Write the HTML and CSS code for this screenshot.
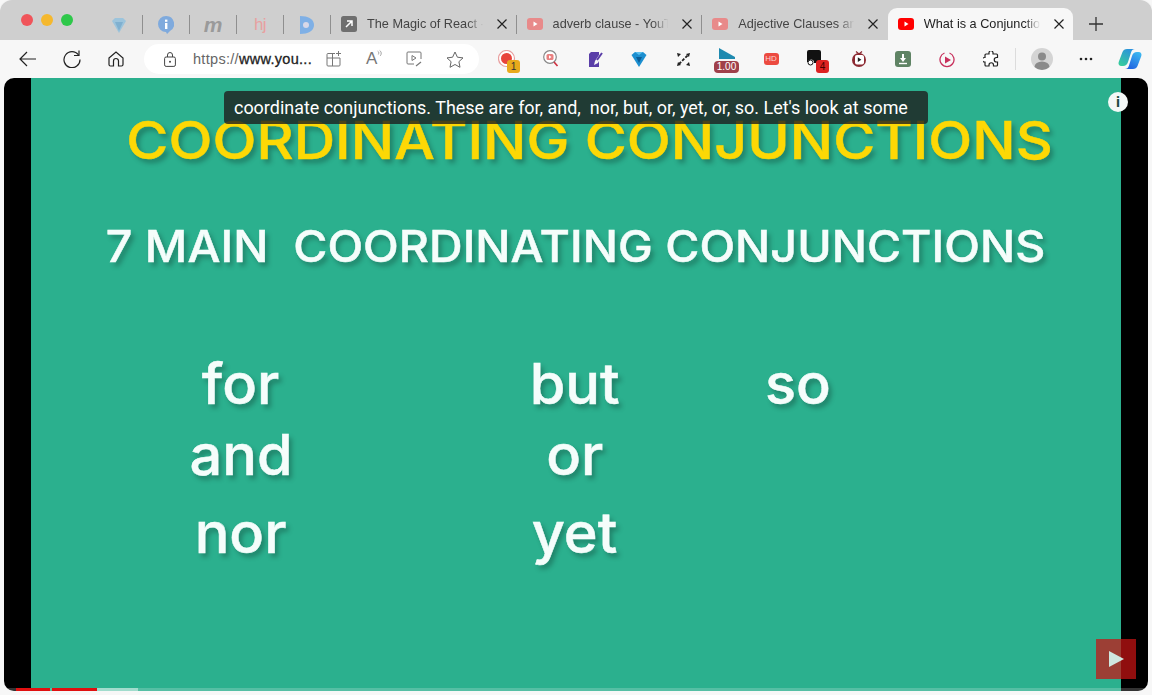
FILE: index.html
```html
<!DOCTYPE html>
<html lang="en">
<head>
  <meta charset="UTF-8">
  <title>What is a Conjunction</title>
  <link rel="stylesheet" href="styles.css">
</head>
<body>

<div class="window">

  <!-- tabs -->
  <div class="tabbar">
    <div class="traffic">
      <span class="dot red"></span>
      <span class="dot yellow"></span>
      <span class="dot green"></span>
    </div>

    <div class="pinned">
      <svg width="16" height="18" viewBox="0 0 16 18"><path d="M1 5l3-3h8l3 3-7 12z" fill="#9cc4dc"/><path d="M4 6h8l-4 9z" fill="#7fb0d0"/></svg>
    </div>
    <div class="pinned">
      <svg width="16" height="18" viewBox="0 0 16 18"><path d="M8 0a8 8 0 0 1 4 15l-3 3-1-2A8 8 0 0 1 8 0z" fill="#7faadd"/><rect x="7" y="7" width="2.4" height="6" fill="#fff"/><rect x="7" y="3.6" width="2.4" height="2.2" fill="#fff"/></svg>
    </div>
    <div class="pinned"><span class="fav-m">m</span></div>
    <div class="pinned"><span class="fav-hj">hj</span></div>
    <div class="pinned">
      <svg width="16" height="18" viewBox="0 0 16 18"><path d="M1 0c8 0 14 3 14 9s-6 9-14 9z" fill="#7fb0e6"/><circle cx="7" cy="9" r="3" fill="#d8d8e8"/></svg>
    </div>

    <div class="tab">
      <svg class="fav" width="16" height="16" viewBox="0 0 16 16"><rect width="16" height="16" rx="2.5" fill="#6f6f6f"/><path d="M5 11l5.500-5.500M6 5h5v5" stroke="#fff" stroke-width="1.500" fill="none"/></svg>
      <span class="tab-title">The Magic of React -</span>
      <svg class="tab-close" width="10" height="10" viewBox="0 0 10 10"><path d="M0.500 0.500l9 9M9.500 0.500l-9 9" stroke="#222" stroke-width="1.200"/></svg>
    </div>
    <div class="tab">
      <svg class="fav" width="16" height="12" viewBox="0 0 16 12"><rect width="16" height="12" rx="3" fill="#e88a8a"/><path d="M6.500 3.500l4 2.500-4 2.500z" fill="#fff"/></svg>
      <span class="tab-title">adverb clause - YouT</span>
      <svg class="tab-close" width="10" height="10" viewBox="0 0 10 10"><path d="M0.500 0.500l9 9M9.500 0.500l-9 9" stroke="#222" stroke-width="1.200"/></svg>
    </div>
    <div class="tab">
      <svg class="fav" width="16" height="12" viewBox="0 0 16 12"><rect width="16" height="12" rx="3" fill="#e88a8a"/><path d="M6.500 3.500l4 2.500-4 2.500z" fill="#fff"/></svg>
      <span class="tab-title">Adjective Clauses an</span>
      <svg class="tab-close" width="10" height="10" viewBox="0 0 10 10"><path d="M0.500 0.500l9 9M9.500 0.500l-9 9" stroke="#222" stroke-width="1.200"/></svg>
    </div>
    <div class="tab active">
      <svg class="fav" width="16" height="12" viewBox="0 0 16 12"><rect width="16" height="12" rx="3" fill="#f00"/><path d="M6.500 3.500l4 2.500-4 2.500z" fill="#fff"/></svg>
      <span class="tab-title">What is a Conjunctior</span>
      <svg class="tab-close" width="10" height="10" viewBox="0 0 10 10"><path d="M0.500 0.500l9 9M9.500 0.500l-9 9" stroke="#222" stroke-width="1.200"/></svg>
    </div>
    <div class="newtab">
      <svg width="14" height="14" viewBox="0 0 14 14"><path d="M7 0v14M0 7h14" stroke="#333" stroke-width="1.300"/></svg>
    </div>
  </div>

  <!-- address bar and extensions -->
  <div class="toolbar">
    <div class="tool">
      <svg width="18" height="16" viewBox="0 0 18 16"><path d="M17 8H1.500M8 1L1 8l7 7" stroke="#222" stroke-width="1.200" fill="none"/></svg>
    </div>
    <div class="tool">
      <svg width="18" height="18" viewBox="0 0 18 18"><path d="M15.500 5A8 8 0 1 0 17 9.500" stroke="#222" stroke-width="1.200" fill="none"/><path d="M16 0.500V5.500H11" stroke="#222" stroke-width="1.200" fill="none"/></svg>
    </div>
    <div class="tool">
      <svg width="16" height="16" viewBox="0 0 16 16"><path d="M1 7l7-6 7 6v6.500a1.500 1.500 0 0 1-1.500 1.500H10.500V10a2.500 2.500 0 0 0-5 0v5H2.500A1.500 1.500 0 0 1 1 13.500z" stroke="#222" stroke-width="1.200" fill="none"/></svg>
    </div>

    <div class="addressbar">
      <svg class="lock" width="12" height="15" viewBox="0 0 12 15"><rect x="0.600" y="5" width="10.800" height="9.400" rx="1.500" stroke="#444" stroke-width="1" fill="none"/><path d="M3.500 5V3a2.500 2.500 0 0 1 5 0v2" stroke="#444" fill="none"/><circle cx="6" cy="9.700" r="1" fill="#444"/></svg>
      <span class="url">https://<b>www.you...</b></span>
      <div class="addr-icons">
        <svg width="16" height="16" viewBox="0 0 16 16"><path d="M9 2.500H2a1 1 0 0 0-1 1V14a1 1 0 0 0 1 1h11a1 1 0 0 0 1-1V7H1M6.500 3v12" stroke="#777" fill="none"/><path d="M12.500 0v5M10 2.500h5" stroke="#777" fill="none"/></svg>
        <span class="read-aloud">A<svg width="7" height="9" viewBox="0 0 7 9"><path d="M1 1c2 1 2 3 1 5M4 0c3 2 3 5 1 8" stroke="#777" fill="none"/></svg></span>
        <svg width="16" height="16" viewBox="0 0 16 16"><path d="M8 13H2a1 1 0 0 1-1-1V2a1 1 0 0 1 1-1h12a1 1 0 0 1 1 1v6" stroke="#777" fill="none"/><path d="M6 4.500l4 2.500-4 2.500z" stroke="#777" fill="none"/><path d="M10 15l5-4" stroke="#777" stroke-width="1.300"/></svg>
        <svg width="18" height="17" viewBox="0 0 18 17"><path d="M9 1l2.400 5.200 5.600.7-4.100 3.800 1.100 5.600L9 13.500l-5 2.800 1.100-5.600L1 6.900l5.600-.7z" stroke="#666" fill="none"/></svg>
      </div>
    </div>

    <div class="tool">
      <svg width="18" height="18" viewBox="0 0 18 18"><circle cx="8.500" cy="8.500" r="8" stroke="#e8a0a0" stroke-width="1.200" fill="#fff"/><circle cx="8.500" cy="8.500" r="5.500" fill="#e8443c"/></svg>
      <span class="badge badge-yellow">1</span>
    </div>
    <div class="tool">
      <svg width="16" height="18" viewBox="0 0 16 18"><circle cx="7" cy="7" r="6.300" stroke="#888" stroke-width="1.200" fill="#fff"/><rect x="3.500" y="4" width="7" height="6" rx="1.500" fill="#e98080"/><path d="M6 5.300l2.500 1.700L6 8.700z" fill="#fff"/><path d="M11 12l3.500 4" stroke="#d03040" stroke-width="1.600"/></svg>
    </div>
    <div class="tool">
      <svg width="15" height="17" viewBox="0 0 15 17"><path d="M3 1h8v3L7 10l-1 4 4-2 1-2v6H1V3z" fill="#5a3ea8"/><path d="M14 2L9 9" stroke="#5a3ea8" stroke-width="2"/></svg>
    </div>
    <div class="tool">
      <svg width="16" height="17" viewBox="0 0 16 17"><path d="M0.500 4L4 1h8l3.500 3L8 16z" fill="#1c8fd0"/><path d="M5 6h6L8 12z" fill="#0c5d96"/><path d="M4 1h8L8 4z" fill="#5cc0ee"/></svg>
    </div>
    <div class="tool">
      <svg width="15" height="15" viewBox="0 0 15 15"><path d="M3 12L12 3" stroke="#222" stroke-width="1.800" stroke-dasharray="3 1.500"/><path d="M1 1l4 1-3 3zM14 1l-1 4-3-3zM1 14l1-4 3 3zM14 14l-4-1 3-3z" fill="#222"/></svg>
    </div>
    <div class="tool">
      <svg class="speed-tri" width="18" height="11" viewBox="0 0 18 11"><path d="M1 0l16 9v2H1z" fill="#1f8ab0"/></svg>
      <span class="speed">1.00</span>
    </div>
    <div class="tool">
      <span class="hd">HD</span>
    </div>
    <div class="tool">
      <svg class="ext-black" width="16" height="16" viewBox="0 0 16 16"><path d="M3 0h10a2 2 0 0 1 2 2v11H8a3 3 0 0 0-6-1H1V2a2 2 0 0 1 2-2z" fill="#111"/><circle cx="4.500" cy="12.500" r="2.500" fill="#fff" stroke="#111"/></svg>
      <span class="badge badge-red">4</span>
    </div>
    <div class="tool">
      <svg width="16" height="17" viewBox="0 0 16 17"><circle cx="8" cy="9" r="7" fill="#8c2a32"/><path d="M5 0.500l3 2.500 3-2.500" stroke="#8c2a32" stroke-width="1.200" fill="none"/><rect x="4" y="4" width="9" height="9.500" rx="2" fill="#fff"/><path d="M6.800 6.300l3.600 2.400-3.600 2.400z" fill="#222"/></svg>
    </div>
    <div class="tool">
      <svg width="16" height="16" viewBox="0 0 16 16"><rect width="16" height="16" rx="3" fill="#5f8364"/><path d="M8 3v5" stroke="#fff" stroke-width="2"/><path d="M5 7h6l-3 4z" fill="#fff"/><path d="M4 12.500h8" stroke="#fff" stroke-width="1.400"/></svg>
    </div>
    <div class="tool">
      <svg width="16" height="17" viewBox="0 0 16 17"><path d="M10.500 2a7 7 0 1 1-5 0" stroke="#c8305c" stroke-width="1.300" fill="none"/><path d="M6 5.500l6 3.500-6 3.500z" fill="#c8305c"/></svg>
    </div>
    <div class="tool">
      <svg width="16" height="17" viewBox="0 0 16 17"><path d="M6 1.500a2 2 0 0 1 4 .5v1h3.500a1 1 0 0 1 1 1v2.500h-1a2 2 0 0 0 0 4.500h1V14a1 1 0 0 1-1 1H10.500v-1a2.200 2.200 0 0 0-4.500 0v1H3a1 1 0 0 1-1-1v-3H1.500a2.200 2.200 0 0 1 0-4.500H2V4a1 1 0 0 1 1-1h3z" stroke="#222" stroke-width="1.200" fill="#fff"/></svg>
    </div>
    <div class="tool-sep"></div>
    <div class="tool">
      <svg width="22" height="22" viewBox="0 0 22 22"><circle cx="11" cy="11" r="11" fill="#d4d4d4"/><circle cx="11" cy="8.500" r="4" fill="#8a8a8a"/><path d="M3.500 19a7.500 5.500 0 0 1 15 0 11 11 0 0 1-15 0z" fill="#8a8a8a"/></svg>
    </div>
    <div class="tool">
      <svg width="14" height="4" viewBox="0 0 14 4"><circle cx="2" cy="2" r="1.300" fill="#222"/><circle cx="7" cy="2" r="1.300" fill="#222"/><circle cx="12" cy="2" r="1.300" fill="#222"/></svg>
    </div>
    <div class="tool">
      <svg width="24" height="22" viewBox="0 0 24 22">
        <defs>
          <linearGradient id="copL" x1="0.800" y1="0" x2="0.200" y2="1"><stop offset="0" stop-color="#2a8fe0"/><stop offset="1" stop-color="#36cc9c"/></linearGradient>
          <linearGradient id="copR" x1="0.800" y1="0" x2="0.200" y2="1"><stop offset="0" stop-color="#1f5fe0"/><stop offset="1" stop-color="#3cb8f0"/></linearGradient>
        </defs>
        <path d="M9 1h8c-2 0-3.200 1-3.800 3L10 14c-.8 2.500-2.500 4-5 4H3.500C1 18 0 16 .7 14L4.500 4C5.300 2 6.800 1 9 1z" fill="url(#copL)"/>
        <path d="M9 1h8c-2 0-3.200 1-3.800 3L10 14c-.8 2.500-2.500 4-5 4H3.500C1 18 0 16 .7 14L4.500 4C5.300 2 6.800 1 9 1z" fill="url(#copR)" transform="rotate(180 12 11)"/>
      </svg>
    </div>
  </div>

  <!-- video -->
  <div class="player">
    <div class="stage">
      <h1 class="title">COORDINATING CONJUNCTIONS</h1>
      <h2 class="subtitle">7 MAIN&nbsp; COORDINATING CONJUNCTIONS</h2>
      <div class="words">
        <div class="word-col">
          <span>for</span>
          <span>and</span>
          <span>nor</span>
        </div>
        <div class="word-col">
          <span>but</span>
          <span>or</span>
          <span>yet</span>
        </div>
        <div class="word-col">
          <span>so</span>
        </div>
      </div>
    </div>

    <div class="caption">coordinate conjunctions. These are for, and,&nbsp; nor, but, or, yet, or, so. Let's look at some</div>
    <div class="info"><span>i</span></div>
    <div class="playbtn">
      <svg width="15" height="16" viewBox="0 0 15 16"><path d="M0 0l15 8-15 8z" fill="#cfe8e0"/></svg>
    </div>
    <div class="progress">
      <div class="seg seg-a"></div>
      <div class="seg seg-b"></div>
      <div class="seg seg-buf"></div>
    </div>
  </div>

</div>

</body>
</html>
```

FILE: styles.css
```css
* {
  box-sizing: border-box;
}
html, body {
  margin: 0;
  height: 100%;
  overflow: hidden;
}
body {
  background-color: #f7f7f7;
  font-family: "Liberation Sans", Arial, sans-serif;
}
.window {
  height: 695px;
  display: flex;
  flex-direction: column;
}

/* tabs */
.tabbar {
  height: 40px;
  flex: none;
  display: flex;
  align-items: stretch;
  background-color: #cfcfcf;
  border-radius: 12px 12px 0 0;
  box-shadow: 0 0 0 1px #f4f4f4;
}
.traffic {
  width: 96px;
  padding: 14px 0 0 21px;
  display: flex;
  gap: 8px;
  align-items: flex-start;
}
.dot {
  width: 12px;
  height: 12px;
  border-radius: 50%;
}
.dot.red { background-color: #f0545a; }
.dot.yellow { background-color: #f5b82e; }
.dot.green { background-color: #2ec84a; }

.pinned {
  width: 47px;
  margin-top: 15px;
  height: 19px;
  display: flex;
  align-items: center;
  justify-content: center;
  border-right: 1px solid #8f8f8f;
}
.fav-m {
  font-style: italic;
  font-weight: bold;
  font-size: 21px;
  color: #9a9a9a;
  line-height: 16px;
}
.fav-hj {
  font-size: 17px;
  color: #e8a0a0;
  letter-spacing: -0.5px;
  line-height: 16px;
}
.tab {
  width: 185.6px;
  margin-top: 8px;
  padding: 0 8px 0 10px;
  display: flex;
  align-items: center;
  position: relative;
  color: #444;
  font-size: 12.7px;
}
.tab::after {
  content: "";
  position: absolute;
  right: 0;
  top: 7px;
  height: 19px;
  border-right: 1px solid #8f8f8f;
}
.tab.active {
  width: 185px;
  background-color: #f7f7f7;
  border-radius: 9px 9px 0 0;
  color: #222;
}
.tab.active::after {
  display: none;
}
.tab:nth-last-child(3)::after {
  display: none;
}
.fav {
  flex: none;
  margin-right: 10px;
}
.tab-title {
  flex: 1;
  white-space: nowrap;
  -webkit-mask-image: linear-gradient(to right, #000 84%, transparent 97%);
  mask-image: linear-gradient(to right, #000 84%, transparent 97%);
}
.tab-close {
  flex: none;
  margin: 0 2px 0 10px;
}
.newtab {
  width: 46px;
  padding-left: 16px;
  padding-top: 17px;
}

/* toolbar */
.toolbar {
  height: 38px;
  flex: none;
  display: flex;
  align-items: center;
  padding-left: 6px;
  background-color: #f7f7f7;
}
.tool {
  width: 44px;
  height: 34px;
  flex: none;
  display: flex;
  align-items: center;
  justify-content: center;
  position: relative;
}
.tool-sep {
  width: 3px;
  height: 22px;
  flex: none;
  margin-right: 4px;
  border-right: 1px solid #dcdcdc;
}
.addressbar {
  width: 335px;
  height: 30px;
  flex: none;
  margin: 0 6px;
  padding-left: 20px;
  display: flex;
  align-items: center;
  background-color: #fff;
  border-radius: 15px;
}
.lock {
  flex: none;
  margin-right: 17px;
}
.url {
  width: 125px;
  flex: none;
  font-size: 14.5px;
  letter-spacing: 0.3px;
  color: #666;
  white-space: nowrap;
}
.url b {
  font-weight: normal;
  color: #222;
  -webkit-text-stroke: 0.3px #222;
}
.addr-icons {
  display: flex;
  align-items: center;
  gap: 24px;
  margin-left: 8px;
}
.read-aloud {
  font-size: 17px;
  color: #777;
  display: flex;
  align-items: flex-start;
  width: 16px;
}
.badge {
  position: absolute;
  right: 9px;
  bottom: 3px;
  width: 13px;
  height: 13px;
  border-radius: 3px;
  font-size: 10px;
  line-height: 13px;
  text-align: center;
}
.badge-yellow {
  background-color: #e8aa1c;
  color: #333;
}
.badge-red {
  right: 8px;
  background-color: #dd2222;
  color: #400;
}
.ext-black {
  margin: -3px 0 0 -2px;
}
.speed-tri {
  position: absolute;
  top: 6px;
  left: 13px;
}
.speed {
  position: absolute;
  left: 9px;
  bottom: 3px;
  width: 25px;
  height: 12px;
  background-color: #a0404a;
  color: #fff;
  border-radius: 4px;
  font-size: 10px;
  line-height: 12px;
  text-align: center;
}
.hd {
  width: 15px;
  height: 12px;
  background-color: #ec4a40;
  color: #fbd5d0;
  border-radius: 3px;
  font-size: 8px;
  line-height: 12px;
  text-align: center;
}

/* video */
.player {
  height: 613px;
  flex: none;
  margin: 0 4px;
  padding: 0 27px;
  background-color: #000;
  border-radius: 10px;
  position: relative;
  overflow: hidden;
}
.stage {
  height: 100%;
  padding-top: 36px;
  display: flex;
  flex-direction: column;
  align-items: center;
  background-color: #2bb08e;
  font-family: Inter, "Liberation Sans", sans-serif;
}
/* Inter runs narrower than the lettering in the video, so it is widened */
.title {
  margin: 0 0 0 28px;
  font-size: 52px;
  line-height: 54px;
  font-weight: 500;
  -webkit-text-stroke: 0.5px #fdd805;
  color: #fdd805;
  white-space: nowrap;
  text-shadow: 3px 4px 5px rgba(0, 0, 0, 0.28);
  transform: scaleX(1.104);
}
.subtitle {
  margin: 53px 0 0;
  font-size: 44px;
  line-height: 50px;
  font-weight: 500;
  -webkit-text-stroke: 0.5px #f5fdfb;
  color: #f5fdfb;
  white-space: nowrap;
  text-shadow: 3px 4px 5px rgba(0, 0, 0, 0.28);
  transform: scaleX(1.059);
}
.words {
  align-self: stretch;
  margin-top: 81px;
  display: grid;
  grid-template-columns: 420px 248px 198px;
}
.word-col {
  display: flex;
  flex-direction: column;
  align-items: center;
  font-size: 56px;
  font-weight: 500;
  line-height: 64px;
  -webkit-text-stroke: 0.5px #f5fdfb;
  color: #f5fdfb;
  text-shadow: 3px 4px 5px rgba(0, 0, 0, 0.28);
}
.word-col span {
  transform: scaleX(1.03);
}
.word-col span:nth-child(2) {
  margin-top: 7px;
}
.word-col span:nth-child(3) {
  margin-top: 14px;
}
.caption {
  position: absolute;
  left: 220px;
  top: 13px;
  width: 704px;
  height: 33px;
  padding-left: 10px;
  background-color: rgba(30, 30, 30, 0.8);
  border-radius: 4px;
  font-family: Roboto, sans-serif;
  font-size: 17.95px;
  line-height: 33px;
  color: #fff;
  white-space: nowrap;
}
.info {
  position: absolute;
  left: 1104px;
  top: 14px;
  width: 20px;
  height: 20px;
  background-color: #f4f8f7;
  border-radius: 50%;
  text-align: center;
  font-family: Roboto, sans-serif;
  font-weight: bold;
  font-size: 15px;
  line-height: 20px;
  color: #1c4a40;
}
.playbtn {
  position: absolute;
  left: 1092px;
  top: 561px;
  width: 40px;
  height: 40px;
  display: flex;
  align-items: center;
  justify-content: center;
  background-color: rgba(200, 20, 20, 0.72);
}
.progress {
  position: absolute;
  left: 0;
  right: 0;
  bottom: 0;
  height: 3px;
  display: flex;
  background-color: rgba(255, 255, 255, 0.2);
  padding-left: 12px;
}
.seg-a {
  width: 34px;
  margin-right: 2px;
  background-color: #e01010;
}
.seg-b {
  width: 45px;
  background-color: #e01010;
}
.seg-buf {
  width: 41px;
  background-color: rgba(255, 255, 255, 0.45);
}
```
